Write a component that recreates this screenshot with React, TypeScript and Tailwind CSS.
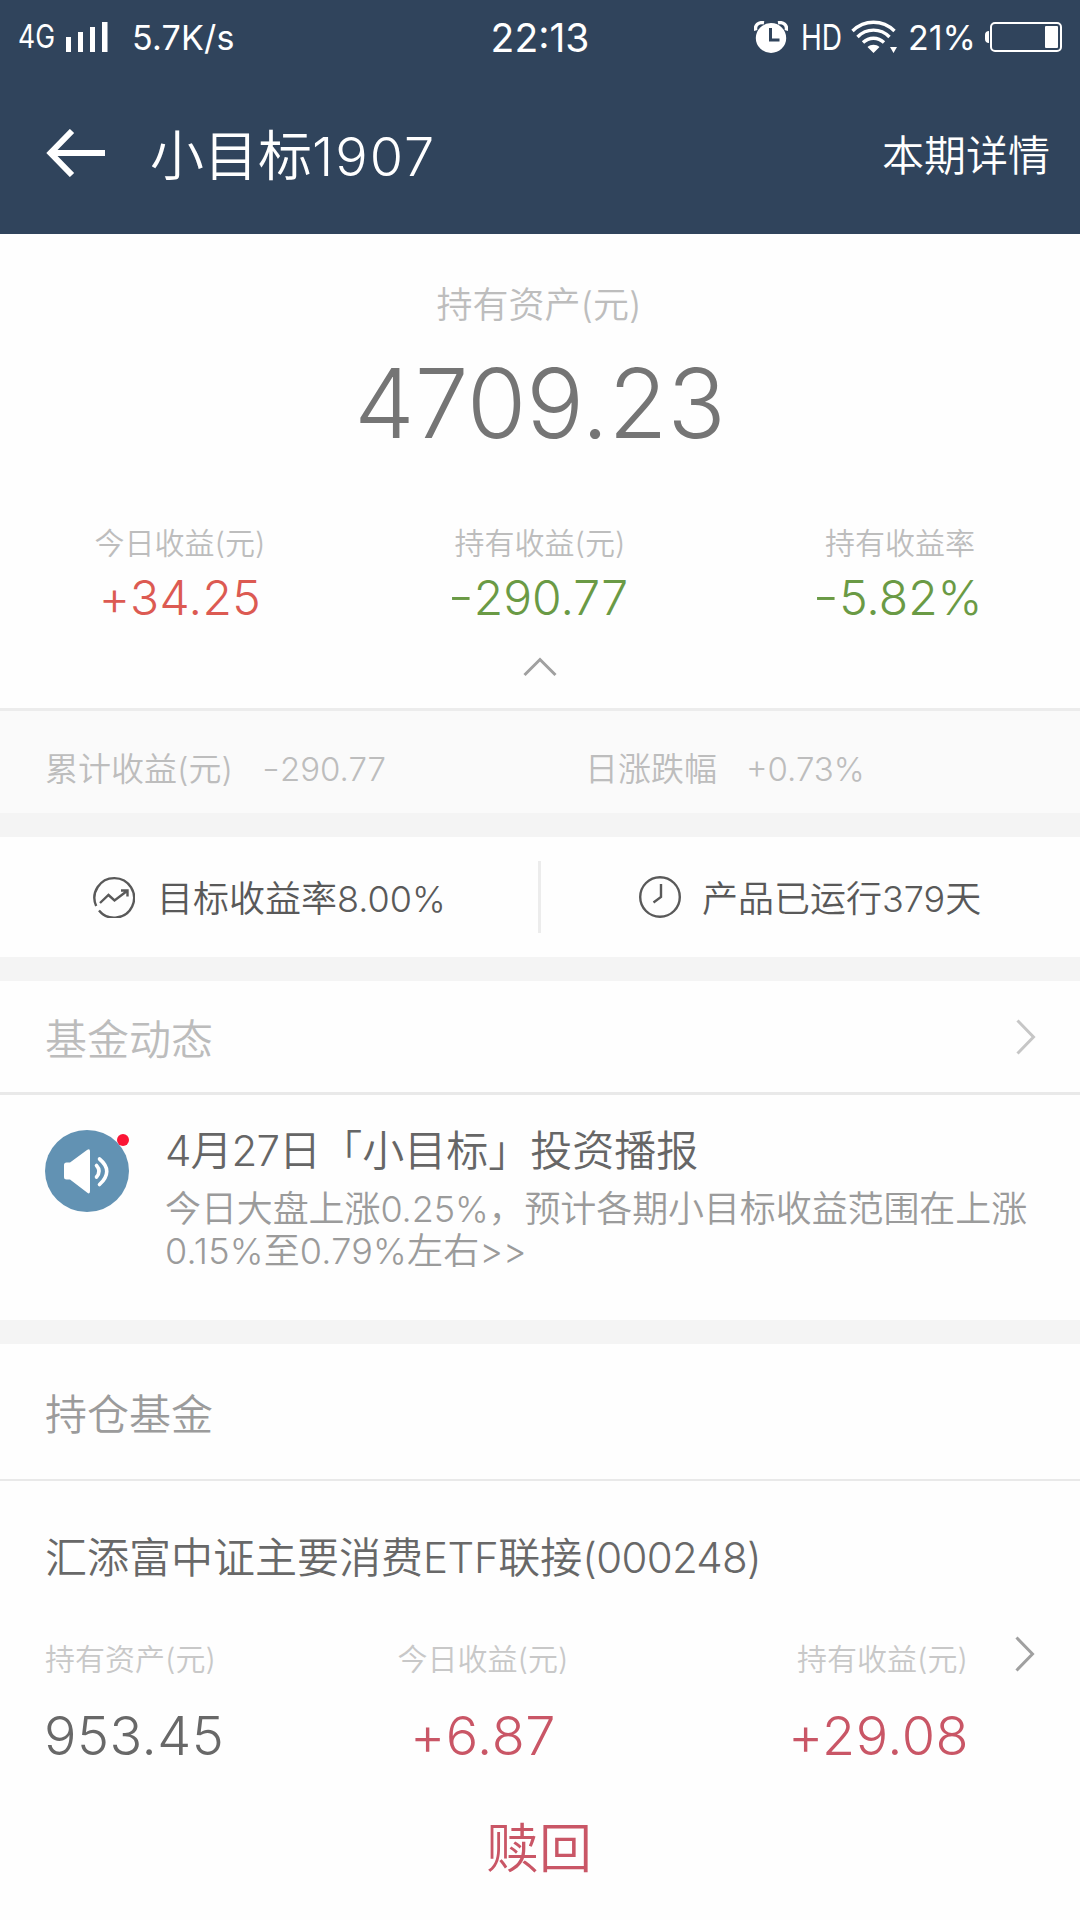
import { clsx } from 'clsx';
import type { ReactNode } from 'react';

interface StatProps {
    label: string;
    value: string;
    tone: 'up' | 'down';
}

const summary: StatProps[] = [
    { label: '今日收益(元)', value: '+34.25', tone: 'up' },
    { label: '持有收益(元)', value: '-290.77', tone: 'down' },
    { label: '持有收益率', value: '-5.82%', tone: 'down' },
];

// widens the leading minus so it reads as a sign, not a hyphen
function Amount({ value }: { value: string }) {
    if (!value.startsWith('-')) return <>{value}</>

    return (
        <>
            <span className="inline-block origin-right scale-x-[1.2] -translate-y-[0.04em]">-</span>
            {value.slice(1)}
        </>
    )
}

function Stat({ label, value, tone }: StatProps) {
    return (
        <div className="flex flex-col items-center">
            <p className="text-[30px] leading-[44px] text-[#bdbdbd]">{label}</p>
            <p className={clsx('mt-[3px] text-[48px] leading-[60px]', tone === 'up' ? 'text-[#dc5a52] tracking-[0.4px]' : 'text-[#6a9a45]')}>
                <Amount value={value} />
            </p>
        </div>
    )
}

function ChevronRight({ className }: { className?: string }) {
    return (
        <svg width="20" height="36" viewBox="0 0 20 36" fill="none" stroke="currentColor" strokeWidth="3" className={className}>
            <path d="M1.5 1.5 L17.5 18 L1.5 34.5" />
        </svg>
    )
}

function Gap() {
    return <div className="h-6 bg-[#f4f4f4]" />
}

function StatusBar() {
    return (
        <div className="h-[72px] grid grid-cols-[1fr_auto_1fr] items-center pl-[18px] pr-[18px]">
            <div className="flex items-center">
                <span className="w-[48px] text-[32px] leading-[70px] font-normal">
                    <span className="inline-block origin-left scale-x-[0.83]">4G</span>
                </span>
                <svg width="42" height="30" viewBox="0 0 42 30" fill="currentColor">
                    <path d="M0 15h5v15H0zM12 10h5v20h-5zM24 5h5v25h-5zM36 0h5.5v30H36z" />
                </svg>
                <span className="ml-[24px] pt-[2px] text-[34px] font-[380] tracking-[0.2px]">5.7K/s</span>
            </div>
            <span className="pt-[3px] text-[39px] leading-[70px] font-normal">22:13</span>
            <div className="flex items-center justify-end">
                <svg width="34" height="32" viewBox="0 0 34 32" fill="none">
                    <ellipse cx="17" cy="17" rx="15.2" ry="15" fill="currentColor" />
                    <path d="M1.8 9.5C.4 4.400 4.500 .8 10 1.8M32.200 9.5C33.600 4.400 29.500 .8 24 1.8" stroke="currentColor" strokeWidth="3.4" />
                    <path d="M16.5 7v12h9" stroke="#30445c" strokeWidth="3" />
                </svg>
                <span className="ml-[13px] w-[50px] text-[36px] leading-[70px] font-normal whitespace-nowrap">
                    <span className="inline-block origin-left scale-x-[0.78]">HD</span>
                </span>
                <svg width="47" height="34" viewBox="0 0 47 34" fill="none" stroke="currentColor" strokeWidth="3.4">
                    <path d="M1.500 11C13.500-.6 31.500-.6 43.500 11M6.500 17C15.500 7.800 29.500 7.800 38.500 17M12 22.5C18 16.8 27 16.8 33 22.500" />
                    <path d="M16.500 27c3.500-3 8.500-3 12 0l-6 6zM39 27h7l-3.500 6z" fill="currentColor" stroke="none" />
                </svg>
                <span className="ml-[10px] pt-[2px] text-[34px] font-[380]">21%</span>
                <svg width="77" height="30" viewBox="0 0 77 30" className="ml-[9px]" fill="none">
                    <path d="M4 9v12C1.500 21 0 19.500 0 17v-4C0 10.500 1.500 9 4 9z" fill="currentColor" />
                    <rect x="6" y="1" width="70" height="28" rx="4" stroke="currentColor" strokeWidth="2" />
                    <rect x="60" y="4" width="13" height="22" rx="1" fill="currentColor" />
                </svg>
            </div>
        </div>
    )
}

function Highlight({ icon, children }: { icon: ReactNode; children: ReactNode }) {
    return (
        <div className="flex items-center text-[36px] leading-[52px] text-[#595959]">
            {icon}
            <span className="pt-[4px]">{children}</span>
        </div>
    )
}

export default function App() {
    return (
        <div className="w-[1080px] h-[1920px] overflow-hidden bg-[#fefefe] font-[350] font-['Inter','Noto_Sans_CJK_SC',sans-serif] whitespace-nowrap">
            <header className="h-[234px] bg-[#30445c] text-white">
                <StatusBar />
                <div className="h-[162px] flex items-center pl-[46px] pr-[30px]">
                    <svg width="60" height="48" viewBox="0 0 60 48" fill="none" stroke="currentColor" strokeWidth="6">
                        <path d="M59 24H6M26 2L4.500 24L26 46" />
                    </svg>
                    <h1 className="ml-[44px] pt-[8px] text-[54px] leading-[78px]">
                        小目标<span className="tracking-[2px]">1907</span>
                    </h1>
                    <span className="ml-auto pt-[5px] text-[42px] leading-[60px]">本期详情</span>
                </div>
            </header>

            <section className="h-[474px] flex flex-col items-center pt-[45px]">
                <p className="pr-[2px] text-[36px] leading-[52px] text-[#bdbdbd]">持有资产(元)</p>
                <p className="mt-[12px] text-[96px] leading-[120px] font-light text-[#757575]">4709.23</p>
                <div className="w-full grid grid-cols-3 mt-[58px]">
                    {summary.map((item) => (
                        <Stat key={item.label} {...item} />
                    ))}
                </div>
                <svg width="34" height="20" viewBox="0 0 34 20" fill="none" stroke="#a0a0a0" strokeWidth="3" className="mt-[29px]">
                    <path d="M1.500 18L17 2.500L32.500 18" />
                </svg>
            </section>

            <section className="h-[105px] flex items-center border-t-[3px] border-[#ececec] bg-[#fafafa] pl-[45px] pt-[14px] text-[33px] leading-[48px] text-[#bdbdbd]">
                <div className="w-[540px] flex gap-[32px]">
                    <span>累计收益(元)</span>
                    <span>
                        <Amount value="-290.77" />
                    </span>
                </div>
                <div className="flex gap-[29px]">
                    <span>日涨跌幅</span>
                    <span>+0.73%</span>
                </div>
            </section>
            <Gap />

            <section className="h-[120px] flex items-center">
                <div className="w-[538px] pl-[93px]">
                    <Highlight
                        icon={
                            <svg width="42" height="42" viewBox="0 0 42 42" fill="none" stroke="currentColor" strokeWidth="2.4" className="mr-[22px]">
                                <path d="M3.200 30A19.800 19.800 0 1 1 6 34.500" />
                                <path d="M7 27L15.500 19L21.500 24.500L34 15M28 14.500H34.500V20.500" />
                            </svg>
                        }
                    >
                        目标收益率8.00%
                    </Highlight>
                </div>
                <div className="w-[3px] h-[72px] bg-[#ececec]" />
                <div className="pl-[98px]">
                    <Highlight
                        icon={
                            <svg width="42" height="42" viewBox="0 0 42 42" fill="none" stroke="currentColor" strokeWidth="2.4" className="mr-[21px]">
                                <circle cx="21" cy="21" r="19.800" />
                                <path d="M22 8V21L14.500 26.500" />
                            </svg>
                        }
                    >
                        产品已运行379天
                    </Highlight>
                </div>
            </section>
            <Gap />

            <section>
                <div className="h-[114px] flex items-center justify-between pl-[45px] pr-[44px] border-b-[3px] border-[#e9e9e9]">
                    <h2 className="pt-[6px] text-[42px] leading-[60px] text-[#bcbcbc]">基金动态</h2>
                    <ChevronRight className="text-[#c6c6c6]" />
                </div>
                <div className="h-[225px] flex pl-[45px] pt-[35px]">
                    <div className="relative w-[84px] h-[82px] mr-[36px]">
                        <svg width="84" height="82" viewBox="0 0 84 82" fill="none">
                            <ellipse cx="42" cy="41" rx="42" ry="41" fill="#6292b3" />
                            <path d="M19 35Q19 32.500 21.500 32.500H25L42 20Q45 18 45 21.500V61Q45 65 42 62.500L25 49.500H21.500Q19 49.500 19 47Z" fill="#fff" />
                            <path d="M51.500 35.500Q56.500 41 51.500 47M54.500 29Q69 41 54.500 54.500" stroke="#fff" strokeWidth="3.600" strokeLinecap="round" />
                        </svg>
                        <span className="absolute right-0 top-[4px] size-3 rounded-full bg-[#fb1535]" />
                    </div>
                    <div className="-mt-[4px]">
                        <h3 className="text-[42px] leading-[50px] text-[#666]">
                            <span className="tracking-[-0.9px]">4月27日</span>「小目标」投资播报
                        </h3>
                        <p className="mt-[12px] text-[36px] leading-[42px] text-[#9b9b9b]">
                            <span className="tracking-[-0.1px]">今日大盘上涨0.25%，预计各期小目标收益范围在上涨</span>
                            <br />
                            <span className="tracking-[0.2px]">0.15%至0.79%左右&gt;&gt;</span>
                        </p>
                    </div>
                </div>
            </section>
            <Gap />

            <section>
                <h2 className="h-[137px] flex items-center pl-[45px] pt-[5px] border-b-2 border-[#e9e9e9] text-[42px] text-[#9b9b9b]">持仓基金</h2>
                <div className="pl-[45px] pt-[47px]">
                    <h3 className="text-[42px] leading-[60px] text-[#686868]">
                        汇添富中证主要消费<span className="tracking-[-0.4px]">ETF</span>联接<span className="tracking-[-0.7px]">(000248)</span>
                    </h3>
                    <div className="mt-[49px] flex text-[30px] leading-[44px] text-[#c8c8c8]">
                        <div className="w-[300px]">
                            <p>持有资产(元)</p>
                            <p className="-ml-[1px] mt-[22px] text-[54px] leading-[66px] tracking-[0.5px] text-[#686868]">953.45</p>
                        </div>
                        <div className="w-[276px] flex flex-col items-center">
                            <p>今日收益(元)</p>
                            <p className="mt-[22px] text-[54px] leading-[66px] tracking-[0.6px] text-[#c95666]">+6.87</p>
                        </div>
                        <div className="w-[347px] flex flex-col items-end">
                            <p>持有收益(元)</p>
                            <p className="-mr-[1px] mt-[22px] text-[54px] leading-[66px] tracking-[0.5px] text-[#c95666]">+29.08</p>
                        </div>
                        <ChevronRight className="-mt-[1px] ml-[47px] text-[#a0a0a0]" />
                    </div>
                </div>
                <button type="button" className="mt-[42px] w-full pr-[2px] text-center text-[53px] leading-[76px] text-[#c95666]">
                    赎回
                </button>
            </section>
        </div>
    )
}
